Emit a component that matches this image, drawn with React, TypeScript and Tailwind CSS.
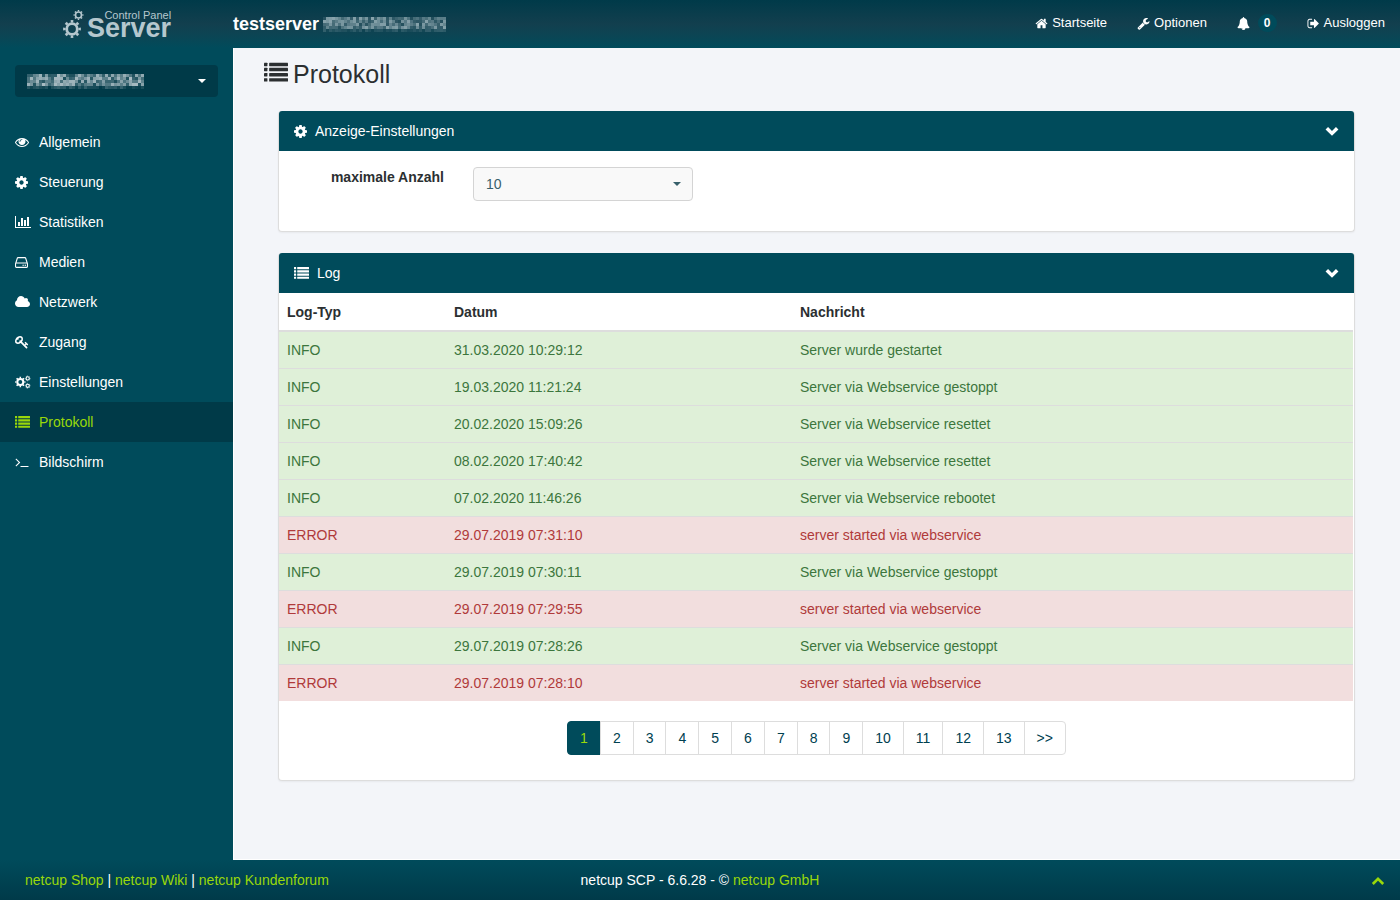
import type { ReactNode } from "react";

const COG =
  "M1152 896q0-106-75-181t-181-75-181 75-75 181 75 181 181 75 181-75 75-181zm512-109v222q0 12-8 23t-20 13l-185 28q-19 54-39 91 35 50 107 138 10 12 10 25t-9 23q-27 37-99 108t-94 71q-12 0-26-9l-138-108q-44 23-91 38-16 136-29 186-7 28-36 28h-222q-14 0-24.5-8.5t-11.5-21.5l-28-184q-49-16-90-37l-141 107q-10 9-25 9-14 0-25-11-126-114-165-168-7-10-7-23 0-12 8-23 15-21 51-66.5t54-70.5q-27-50-41-99l-183-27q-13-2-21-12.5t-8-23.5v-222q0-12 8-23t19-13l186-28q14-46 39-92-40-57-107-138-10-12-10-24 0-10 9-23 26-36 98.5-107.5t94.5-71.5q13 0 26 10l138 107q44-23 91-38 16-136 29-186 7-28 36-28h222q14 0 24.5 8.5t11.5 21.5l28 184q49 16 90 37l142-107q9-9 24-9 13 0 25 10 129 119 165 170 7 8 7 22 0 12-8 23-15 21-51 66.5t-54 70.5q26 50 41 98l183 28q13 2 21 12.5t8 23.5z";

const paths = {
  eye: "M1664 960q-152-236-381-353 61 104 61 225 0 185-131.5 316.5t-316.5 131.5-316.5-131.5-131.5-316.5q0-121 61-225-229 117-381 353 133 205 333.5 326.5t434.5 121.5 434.5-121.5 333.5-326.5zm-720-384q0-20-14-34t-34-14q-125 0-214.5 89.5t-89.5 214.5q0 20 14 34t34 14 34-14 14-34q0-86 61-147t147-61q20 0 34-14t14-34zm848 384q0 34-20 69-140 230-376.5 368.5t-499.5 138.5-499.5-139-376.5-368q-20-35-20-69t20-69q140-229 376.5-368t499.5-139 499.5 139 376.5 368q20 35 20 69z",
  chart:
    "M640 896v512h-256v-512h256zm384-512v1024h-256v-1024h256zm1024 1152v128h-2048v-1536h128v1408h1920zm-640-896v768h-256v-768h256zm384-384v1152h-256v-1152h256z",
  disk: "M1168 1216q0 33-23.5 56.5t-56.5 23.5-56.5-23.5-23.5-56.5 23.5-56.5 56.5-23.5 56.5 23.5 23.5 56.5zm256 0q0 33-23.5 56.5t-56.5 23.5-56.5-23.5-23.5-56.5 23.5-56.5 56.5-23.5 56.5 23.5 23.5 56.5zm112 160v-320q0-13-9.5-22.5t-22.5-9.5h-1216q-13 0-22.5 9.5t-9.5 22.5v320q0 13 9.5 22.5t22.5 9.5h1216q13 0 22.5-9.5t9.5-22.5zm-1230-480h1180l-157-482q-4-13-16-21.5t-26-8.5h-782q-14 0-26 8.5t-16 21.5zm1358 160v320q0 66-47 113t-113 47h-1216q-66 0-113-47t-47-113v-320q0-25 16-75l197-606q17-53 63-86t101-33h782q55 0 101 33t63 86l197 606q16 50 16 75z",
  cloud:
    "M1920 1152q0 159-112.5 271.5t-271.5 112.5h-1088q-185 0-316.5-131.5t-131.5-316.5q0-132 71-241.5t187-163.5q-2-28-2-43 0-212 150-362t362-150q158 0 286.5 88t187.5 230q70-62 166-62 106 0 181 75t75 181q0 75-41 138 129 30 213 134.5t84 239.5z",
  key: "M832 512q0-80-56-136t-136-56-136 56-56 136q0 42 19 83-41-19-83-19-80 0-136 56t-56 136 56 136 136 56 136-56 56-136q0-42-19-83 41 19 83 19 80 0 136-56t56-136zm851 704q0 17-49 66t-66 49q-9 0-28.5-16t-36.5-33-38.5-40-24.5-26l-96 96 220 220q28 28 28 68 0 42-39 81t-81 39q-40 0-68-28l-671-671q-176 131-365 131-163 0-265.5-102.5t-102.5-265.5q0-160 95-313t248-248 313-95q163 0 265.5 102.5t102.5 265.5q0 189-131 365l355 355 96-96q-3-3-26-24.5t-40-38.5-33-36.5-16-28.5q0-17 49-66t66-49q13 0 23 10 6 6 46 44.5t82 79.5 86.5 86 73 78 28.5 41z",
  terminal:
    "M649 983l-466 466q-10 10-23 10t-23-10l-50-50q-10-10-10-23t10-23l393-393-393-393q-10-10-10-23t10-23l50-50q10-10 23-10t23 10l466 466q10 10 10 23t-10 23zm1079 457v64q0 14-9 23t-23 9h-960q-14 0-23-9t-9-23v-64q0-14 9-23t23-9h960q14 0 23 9t9 23z",
  home: "M1472 992v480q0 26-19 45t-45 19h-384v-384h-256v384h-384q-26 0-45-19t-19-45v-480q0-1 .5-3t.5-3l575-474 575 474q1 2 1 6zm223-69l-62 74q-8 9-21 11h-3q-13 0-21-7l-692-577-692 577q-12 8-24 7-13-2-21-11l-62-74q-8-10-7-23.5t11-21.5l719-599q32-26 76-26t76 26l244 204v-195q0-14 9-23t23-9h192q14 0 23 9t9 23v408l219 182q10 8 11 21.5t-7 23.5z",
  wrench:
    "M448 1472q0-26-19-45t-45-19-45 19-19 45 19 45 45 19 45-19 19-45zm644-420l-682 682q-37 37-90 37-52 0-91-37l-106-108q-38-36-38-90 0-53 38-91l681-681q39 98 114.5 173.5t173.5 114.5zm634-435q0 39-23 106-47 134-164.5 217.5t-258.5 83.5q-185 0-316.5-131.5t-131.5-316.5 131.5-316.5 316.5-131.5q58 0 121.5 16.5t107.5 46.5q16 11 16 28t-16 28l-293 169v224l193 107q5-3 79-48.5t135.5-81 70.5-35.5q15 0 23.5 10t8.5 25z",
  bell: "M912 1696q0-16-16-16-59 0-101.5-42.5t-42.5-101.5q0-16-16-16t-16 16q0 73 51.5 124.5t124.5 51.5q16 0 16-16zm816-288q0 52-38 90t-90 38h-448q0 106-75 181t-181 75-181-75-75-181h-448q-52 0-90-38t-38-90q50-42 91-88t85-119.5 74.5-158.5 50-206 19.5-260q0-152 117-282.5t307-158.5q-8-19-8-39 0-40 28-68t68-28 68 28 28 68q0 20-8 39 190 28 307 158.5t117 282.5q0 139 19.5 260t50 206 74.5 158.5 85 119.5 91 88z",
  logout:
    "M704 1440q0 4 1 20t.5 26.5-3 23.5-10 19.5-20.5 6.5h-320q-119 0-203.5-84.5t-84.5-203.5v-704q0-119 84.5-203.5t203.5-84.5h320q13 0 22.5 9.5t9.5 22.5q0 4 1 20t.5 26.5-3 23.5-10 19.5-20.5 6.5h-320q-66 0-113 47t-47 113v704q0 66 47 113t113 47h312l11.5 1 11.5 3 8 5.5 7 9 2 13.5zm928-544q0 26-19 45l-544 544q-19 19-45 19t-45-19-19-45v-288h-448q-26 0-45-19t-19-45v-384q0-26 19-45t45-19h448v-288q0-26 19-45t45-19 45 19l544 544q19 19 19 45z",
};

function Icon({ d, box = "0 0 1792 1792", className = "size-[14px]" }: { d: string; box?: string; className?: string }) {
  return (
    <svg viewBox={box} fill="currentColor" className={className} aria-hidden="true">
      <path d={d} />
    </svg>
  );
}

function CogIcon() {
  return <Icon d={COG} box="128 128 1536 1536" className="size-[13px]" />;
}

function ListIcon({ className = "size-[15px]" }: { className?: string }) {
  return (
    <svg viewBox="0 0 1792 1792" fill="currentColor" className={className} aria-hidden="true">
      {[128, 512, 896, 1280].map((y) => (
        <g key={y}>
          <rect x="0" y={y} width="256" height="256" rx="32" />
          <rect x="384" y={y} width="1408" height="256" rx="32" />
        </g>
      ))}
    </svg>
  );
}

function Gear({ cx, cy, r, ring, tooth }: { cx: number; cy: number; r: number; ring: number; tooth: number }) {
  return (
    <g fill="none" stroke="currentColor">
      <circle cx={cx} cy={cy} r={r} strokeWidth={ring} />
      <circle cx={cx} cy={cy} r={r + ring / 2 + tooth / 2 - 0.2} strokeWidth={tooth} pathLength={80} strokeDasharray="4.4 5.6" strokeDashoffset="2.2" />
    </g>
  );
}

function CogsIcon() {
  return (
    <svg viewBox="0 0 16 14" className="h-[14px] w-4" aria-hidden="true">
      <Gear cx={5.3} cy={7} r={3} ring={2} tooth={1.4} />
      <Gear cx={12.7} cy={3.4} r={1.6} ring={1.1} tooth={0.8} />
      <Gear cx={12.7} cy={10.8} r={1.6} ring={1.1} tooth={0.8} />
    </svg>
  );
}

// server name is masked, so only a pixelated strip is shown
function MaskedName({ cols, seed, className }: { cols: number; seed: number; className: string }) {
  const cells = [];
  for (let x = 0; x < cols; x++) {
    for (let y = 0; y < 5; y++) {
      const v = Math.sin((x + 1) * 12.9898 + (y + 1) * 78.233 + seed) * 43758.5453;
      const n = v - Math.floor(v);
      cells.push(<rect key={x + "-" + y} x={x * 3} y={y * 3} width="3" height="3" opacity={y === 4 ? n * 0.3 : 0.15 + n * 0.8} />);
    }
  }
  return (
    <svg viewBox={`0 0 ${cols * 3} 15`} fill="currentColor" className={className} aria-hidden="true">
      {cells}
    </svg>
  );
}

const menuItems = [
  { name: "Allgemein", icon: <Icon d={paths.eye} /> },
  { name: "Steuerung", icon: <CogIcon /> },
  { name: "Statistiken", icon: <Icon d={paths.chart} box="0 0 2048 1792" className="h-[14px] w-4" /> },
  { name: "Medien", icon: <Icon d={paths.disk} box="128 128 1536 1536" className="size-[13px]" /> },
  { name: "Netzwerk", icon: <Icon d={paths.cloud} box="0 0 1920 1792" className="h-[14px] w-[15px]" /> },
  { name: "Zugang", icon: <Icon d={paths.key} /> },
  { name: "Einstellungen", icon: <CogsIcon /> },
  { name: "Protokoll", icon: <ListIcon />, active: true },
  { name: "Bildschirm", icon: <Icon d={paths.terminal} /> },
];

const logs = [
  ["INFO", "31.03.2020 10:29:12", "Server wurde gestartet"],
  ["INFO", "19.03.2020 11:21:24", "Server via Webservice gestoppt"],
  ["INFO", "20.02.2020 15:09:26", "Server via Webservice resettet"],
  ["INFO", "08.02.2020 17:40:42", "Server via Webservice resettet"],
  ["INFO", "07.02.2020 11:46:26", "Server via Webservice rebootet"],
  ["ERROR", "29.07.2019 07:31:10", "server started via webservice"],
  ["INFO", "29.07.2019 07:30:11", "Server via Webservice gestoppt"],
  ["ERROR", "29.07.2019 07:29:55", "server started via webservice"],
  ["INFO", "29.07.2019 07:28:26", "Server via Webservice gestoppt"],
  ["ERROR", "29.07.2019 07:28:10", "server started via webservice"],
];

const pages = ["1", "2", "3", "4", "5", "6", "7", "8", "9", "10", "11", "12", "13", ">>"];

function Header() {
  return (
    <header className="flex h-12 bg-linear-to-b from-[#003a49] via-[#123f4e] to-[#004b5b]">
      <a href="#" className="flex w-[233px] shrink-0 pl-[62px] text-[#b5c7ce]">
        <svg viewBox="0 0 25 48" className="h-12 w-[25px]" aria-hidden="true">
          <Gear cx={10} cy={29} r={5.3} ring={2.8} tooth={2.4} />
          <Gear cx={16.5} cy={15} r={3} ring={1.6} tooth={1.4} />
        </svg>
        <span className="flex flex-col items-end pt-[10px]">
          <span className="text-[11px] leading-[10px]">Control Panel</span>
          <span className="text-[27px] leading-4 font-bold">Server</span>
        </span>
      </a>
      <div className="flex flex-1 items-center gap-1 text-lg font-bold text-white">
        testserver
        <MaskedName cols={41} seed={3} className="h-[15px] w-[123px] text-[#8fa9b1]" />
      </div>
      <nav className="flex h-[46px] items-center gap-[30px] pr-[15px] text-[13px] text-white">
        <a href="#" className="flex items-center gap-1">
          <Icon d={paths.home} className="size-[13px]" />
          Startseite
        </a>
        <a href="#" className="flex items-center gap-1">
          <Icon d={paths.wrench} className="size-[13px]" />
          Optionen
        </a>
        <a href="#" className="flex items-center gap-2">
          <Icon d={paths.bell} className="size-[13px]" />
          <span className="rounded-full bg-[#004b5b] px-[6px] py-[2px] text-xs leading-[14px] font-bold">0</span>
        </a>
        <a href="#" className="flex items-center gap-1">
          <Icon d={paths.logout} className="size-[13px]" />
          Ausloggen
        </a>
      </nav>
    </header>
  );
}

function Sidebar() {
  return (
    <aside className="w-[233px] shrink-0 text-sm text-white">
      <div className="px-[15px] pt-[17px] pb-[25px]">
        <button type="button" aria-label="Server auswählen" className="flex h-8 w-full items-center justify-between rounded bg-[#003a48] px-3">
          <MaskedName cols={39} seed={7} className="h-[15px] w-[117px] text-[#b4c5cb]" />
          <svg viewBox="0 0 8 4" fill="currentColor" className="h-1 w-2" aria-hidden="true">
            <path d="M0 0h8L4 4z" />
          </svg>
        </button>
      </div>
      <nav>
        {menuItems.map((item) => (
          <a
            key={item.name}
            href="#"
            className={item.active ? "flex h-10 items-center bg-[#003a48] pl-[15px] text-[#99d80a]" : "flex h-10 items-center pl-[15px]"}
          >
            <span className="w-6">{item.icon}</span>
            {item.name}
          </a>
        ))}
      </nav>
    </aside>
  );
}

function Panel({ title, icon, children }: { title: string; icon: ReactNode; children: ReactNode }) {
  return (
    <section className="mb-[21px] rounded border-x border-b border-[#dddddd] bg-white shadow-xs">
      <div className="flex h-10 items-center justify-between rounded-t-[3px] bg-[#004b5b] px-[15px] text-white">
        <h2 className="flex items-center gap-2">
          {icon}
          {title}
        </h2>
        <button type="button" aria-label={title + " einklappen"}>
          <svg viewBox="0 0 14 14" fill="none" stroke="currentColor" strokeWidth="3.5" className="size-[14px]" aria-hidden="true">
            <path d="M1.8 4.2 7 9.4l5.2-5.2" />
          </svg>
        </button>
      </div>
      {children}
    </section>
  );
}

function LogTable() {
  return (
    <div className="pr-px">
      <table className="w-full table-fixed text-left">
        <thead>
          <tr className="h-[38px] border-b-2 border-[#dddddd] text-[#2b2f31]">
            <th className="w-[167px] p-2">Log-Typ</th>
            <th className="w-[346px] p-2">Datum</th>
            <th className="p-2">Nachricht</th>
          </tr>
        </thead>
        <tbody>
          {logs.map(([type, date, message]) => (
            <tr
              key={date}
              className={
                type === "ERROR"
                  ? "border-t border-[#dddddd] bg-[#f2dede] text-[#b03a3a]"
                  : "border-t border-[#dddddd] bg-[#dff0d8] text-[#3c763d]"
              }
            >
              <td className="p-2">{type}</td>
              <td className="p-2">{date}</td>
              <td className="p-2">{message}</td>
            </tr>
          ))}
        </tbody>
      </table>
    </div>
  );
}

export default function App() {
  return (
    <div className="flex min-h-screen flex-col bg-[#004b5b] font-['Liberation_Sans',Arial,sans-serif]">
      <Header />
      <div className="flex flex-1">
        <Sidebar />
        <main className="flex-1 border-b border-l border-white bg-[#f3f5f9] text-sm text-[#2b2f31]">
          <h1 className="flex h-[63px] items-start gap-[5px] pt-[10px] pl-[30px] text-[25px] leading-8">
            <ListIcon className="mt-[3px] size-6" />
            Protokoll
          </h1>
          <div className="mr-[45px] ml-[44px]">
            <Panel title="Anzeige-Einstellungen" icon={<CogIcon />}>
              <div className="flex h-20 pt-4">
                <label htmlFor="max" className="w-[165px] text-right font-bold">
                  maximale Anzahl
                </label>
                <div className="relative ml-[29px] h-[34px] w-[220px]">
                  <select
                    id="max"
                    defaultValue="10"
                    className="h-full w-full appearance-none rounded border border-[#d4d4d4] bg-[#f9f9f9] px-3 text-[#38606b]"
                  >
                    <option>10</option>
                    <option>25</option>
                    <option>50</option>
                  </select>
                  <svg
                    viewBox="0 0 8 4"
                    fill="currentColor"
                    className="pointer-events-none absolute top-[15px] right-3 h-1 w-2 text-[#38606b]"
                    aria-hidden="true"
                  >
                    <path d="M0 0h8L4 4z" />
                  </svg>
                </div>
              </div>
            </Panel>
            <Panel title="Log" icon={<ListIcon />}>
              <LogTable />
              <nav aria-label="Seiten" className="flex justify-center pt-5 pb-[25px] text-[#004050]">
                {pages.map((page) => (
                  <a
                    key={page}
                    href="#"
                    className={
                      page === "1"
                        ? "rounded-l border border-[#004b5b] bg-[#004b5b] px-3 py-[6px] text-[#99d80a]"
                        : "-ml-px border border-[#dddddd] px-3 py-[6px] last:rounded-r"
                    }
                  >
                    {page}
                  </a>
                ))}
              </nav>
            </Panel>
          </div>
        </main>
      </div>
      <footer className="grid h-10 grid-cols-3 items-center bg-linear-to-b from-[#004b5b] to-[#003a49] text-sm text-white">
        <div className="pl-[25px]">
          <a href="#" className="text-[#99d80a]">netcup Shop</a> | <a href="#" className="text-[#99d80a]">netcup Wiki</a> |{" "}
          <a href="#" className="text-[#99d80a]">netcup Kundenforum</a>
        </div>
        <div className="text-center">
          netcup SCP - 6.6.28 - © <a href="#" className="text-[#99d80a]">netcup GmbH</a>
        </div>
        <a href="#" aria-label="Nach oben" className="mr-[15px] justify-self-end text-[#99d80a]">
          <svg viewBox="0 0 14 14" fill="none" stroke="currentColor" strokeWidth="2.6" className="size-[14px]" aria-hidden="true">
            <path d="M1.8 11 7 5.8l5.2 5.2" />
          </svg>
        </a>
      </footer>
    </div>
  );
}
